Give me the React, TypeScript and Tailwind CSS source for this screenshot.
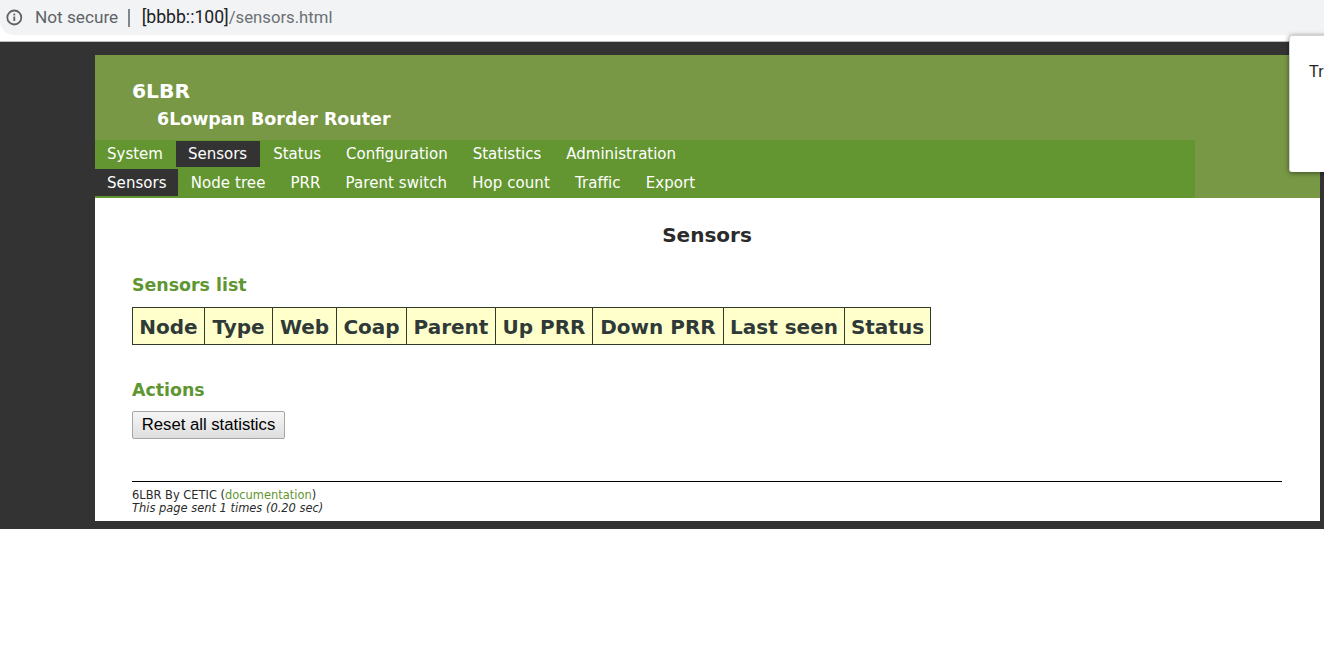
export default function App() {
  const top = ["System", "Sensors", "Status", "Configuration", "Statistics", "Administration"];
  const sub = ["Sensors", "Node tree", "PRR", "Parent switch", "Hop count", "Traffic", "Export"];
  const cols = [
    ["Node", "w-[72px]"],
    ["Type", "w-[68px]"],
    ["Web", "w-[64px]"],
    ["Coap", "w-[70px]"],
    ["Parent", "w-[89px]"],
    ["Up PRR", "w-[97px]"],
    ["Down PRR", "w-[131px]"],
    ["Last seen", "w-[121px]"],
    ["Status", "w-[85px]"],
  ];
  return (
    <div className="relative w-[1324px] h-[648px] overflow-hidden bg-white font-['DejaVu_Sans',sans-serif] text-[#2b2b2b]">
      <div className="h-[35px] bg-[#f1f3f4] rounded-bl-[14px] flex items-center pl-[6px] font-['Roboto',sans-serif]">
        <svg width="17" height="17" viewBox="0 0 17 17" className="shrink-0">
          <circle cx="8.3" cy="8.5" r="7" fill="none" stroke="#5f6368" strokeWidth="1.8" />
          <rect x="7.4" y="7.5" width="1.8" height="4.5" fill="#5f6368" />
          <rect x="7.4" y="4.6" width="1.8" height="1.8" fill="#5f6368" />
        </svg>
        <span className="ml-[12px] text-[17.2px] text-[#5f6368]">Not secure</span>
        <span className="ml-[10px] w-[1.5px] h-[18px] bg-[#80868b]" />
        <span className="ml-[12px] text-[17.6px] text-[#202124]">[bbbb::100]</span>
        <span className="text-[16.7px] text-[#6b7075]">/sensors.html</span>
      </div>
      <div className="h-[6px]" />
      <div className="h-[488px] border-t border-[#bdbdbd] bg-[#333333] pt-[13px] pl-[95px] pr-[4px]">
        <div className="h-[143px] bg-[#789845] flex flex-col">
          <div className="h-[85px] pl-[37px] pt-[22px] text-white font-bold">
            <div className="text-[20.3px] leading-[28px]">6LBR</div>
            <div className="text-[17.45px] leading-[29px] pl-[25px]">6Lowpan Border Router</div>
          </div>
          <div className="w-[1100px] h-[58px] bg-[#639631] text-white text-[15px] flex flex-col">
            <div className="flex h-[26px] mt-[1px]">
              {top.map((t) => (
                <span
                  key={t}
                  className={`pl-[12px] mr-[1px] leading-[26px] ${t === "Sensors" ? "bg-[#333333] pr-[13px]" : "pr-[12px]"}`}
                >
                  {t}
                </span>
              ))}
            </div>
            <div className="flex h-[27px] mt-[2px] tracking-[0.07px]">
              {sub.map((t, i) => (
                <span
                  key={t}
                  className={`pl-[12px] mr-[1px] leading-[29px] ${i === 0 ? "bg-[#333333] pr-[11px]" : "pr-[12px]"}`}
                >
                  {t}
                </span>
              ))}
            </div>
          </div>
        </div>
        <div className="h-[323px] bg-white pl-[37px] pr-[38px] flex flex-col">
          <h1 className="mt-[24px] h-[26px] text-center text-[20px] leading-[26px] font-bold text-[#2b2b2b]">Sensors</h1>
          <h2 className="mt-[25px] text-[17.4px] leading-[25px] font-bold text-[#5f9632]">Sensors list</h2>
          <div className="mt-[9px] flex w-fit h-[38px] border border-[#2f3a2a] bg-[#ffffcc] text-[#2f3a38] text-[20px] font-bold">
            {cols.map(([c, w], i) => (
              <div
                key={c}
                className={`${w} shrink-0 flex items-center justify-center leading-none pt-[2px] ${i < cols.length - 1 ? "border-r border-[#2f3a2a]" : ""}`}
              >
                {c}
              </div>
            ))}
          </div>
          <h2 className="mt-[33px] text-[17.4px] leading-[25px] font-bold text-[#5f9632]">Actions</h2>
          <button className="mt-[8px] w-[153px] h-[28px] rounded-[2px] border border-[#a6a6a6] bg-gradient-to-b from-[#f6f6f6] to-[#dedede] font-['Liberation_Sans',sans-serif] text-[16.7px] text-black">
            Reset all statistics
          </button>
          <div className="mt-[42px] h-px bg-black" />
          <div className="mt-[7px] text-[11.45px] leading-[13px] text-[#2b2b2b]">
            6LBR By CETIC (<span className="text-[#5f9632]">documentation</span>)
          </div>
          <div className="text-[11.45px] leading-[13px] italic text-[#2b2b2b]">This page sent 1 times (0.20 sec)</div>
        </div>
      </div>
      <div className="absolute left-[1289px] top-[35px] w-[60px] h-[137px] bg-white rounded-[3px] border-t border-l border-[#d5d5d5] shadow-[0_1px_5px_rgba(0,0,0,0.5)] pl-[19px] pt-[26px] font-['Liberation_Sans',sans-serif] text-[16px] leading-[20px] text-[#222]">
        Tr
      </div>
    </div>
  );
}
